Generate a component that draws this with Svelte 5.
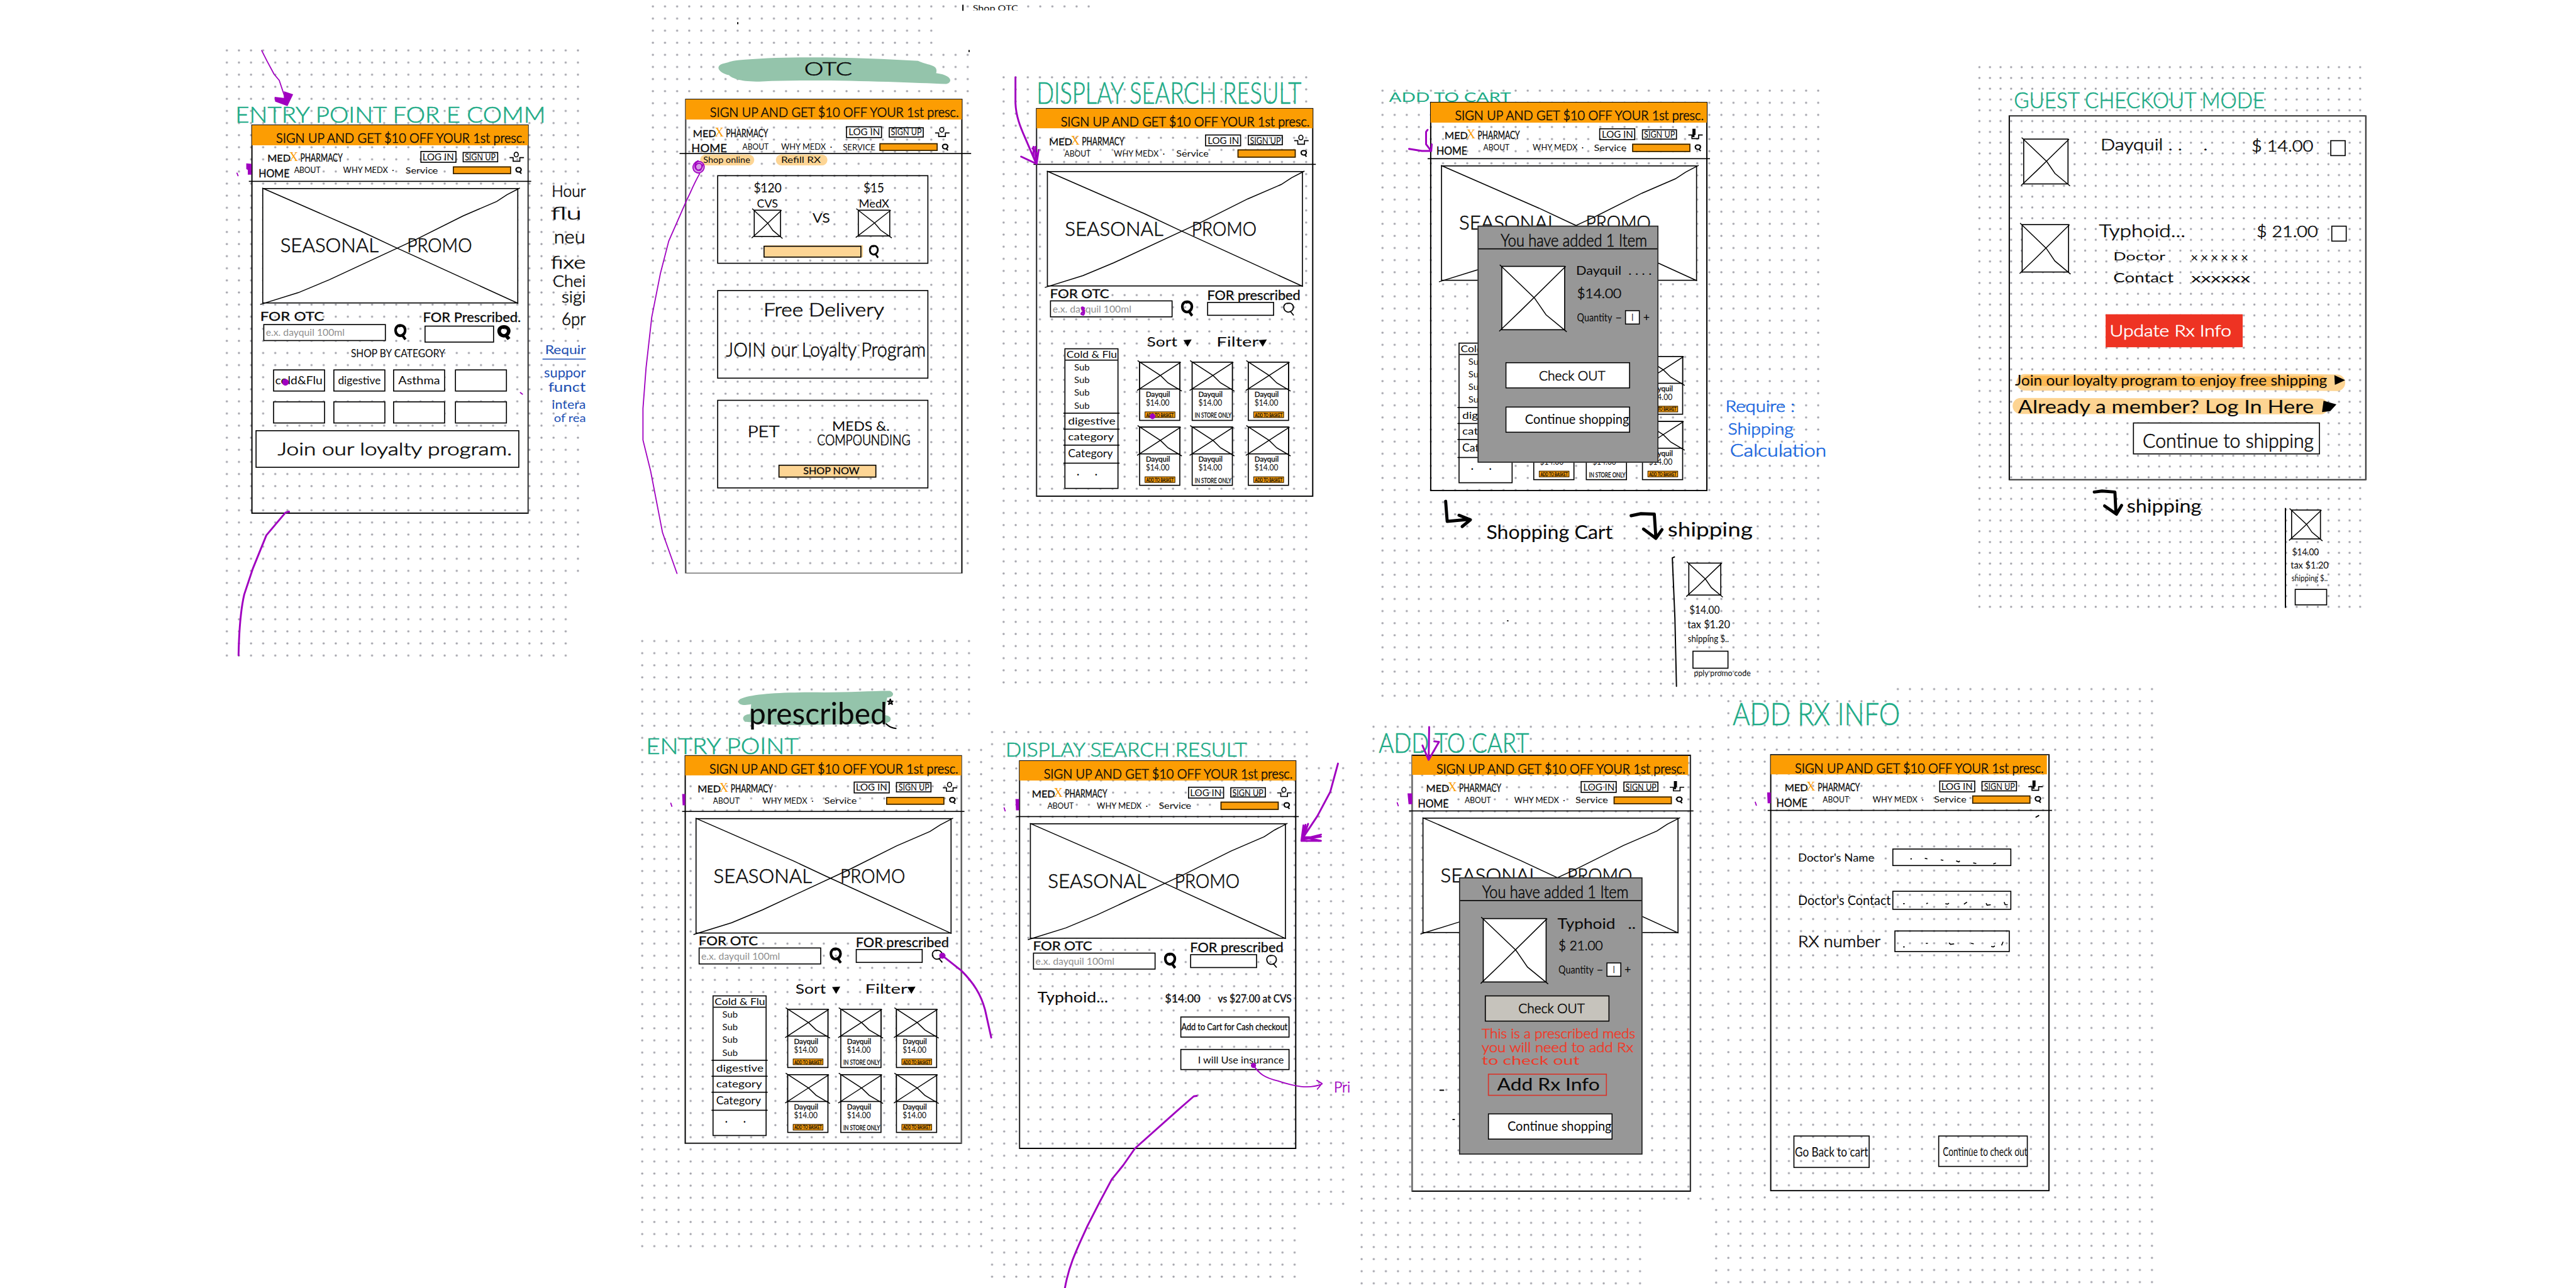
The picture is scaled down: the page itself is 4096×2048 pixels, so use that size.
<script>
  // Dotted paper areas: left, top, columns, rows, pitch x, pitch y
  const P = 23.49;
  const sheets = [
    [440.3, 97.9, 29, 51], [1121.8, 97.9, 1, 44],
    [1267.3, 12.5, 24, 47], [1831.3, 106.5, 3, 43], [1831.3, 12.5, 3, 1], [1995.7, 12.5, 6, 1],
    [1948, 150, 26, 51],
    [2683.5, 176, 37, 51],
    [3842, 130.3, 37, 51, 20.53, 20.95],
    [1246.6, 1244.3, 28, 7], [1246.6, 1408.7, 25, 2], [1246.6, 1455.7, 29, 42],
    [1925.6, 1421, 27, 40], [1925.6, 2360.6, 26, 6], [2560, 1491, 3, 37],
    [2666, 1410.6, 28, 3], [2643, 1481, 29, 37], [2643, 2350, 24, 7],
    [3354.8, 1361, 36, 49], [3683.7, 1337.5, 22, 1], [3331, 2348.6, 1, 7], [3324.5, 1411, 1, 40]
  ].map(([x, y, c, r, px = P, py = P]) => ({ x: x - px / 2, y: y - py / 2, w: c * px, h: r * py, px, py }));

  // Handwritten notes on the canvas: text, left, top, width, cap height, style
  const notes = [
    ['ENTRY POINT FOR E COMM', 457, 207, 602, 31, 'green'],
    ['DISPLAY SEARCH RESULT', 2012, 161, 514, 41, 'green'],
    ['ADD TO CART', 2696, 180, 237, 18, 'green'],
    ['GUEST CHECKOUT MODE', 3909, 179, 487, 31, 'green'],
    ['ENTRY POINT', 1254, 1433, 296, 31, 'green'],
    ['DISPLAY SEARCH RESULT', 1952, 1440, 468, 28, 'green'],
    ['ADD TO CART', 2676, 1423, 292, 38, 'green'],
    ['ADD RX INFO', 3363, 1365, 325, 43, 'green'],
    ['OTC', 1561, 121, 93, 26, 'black'],
    ['prescribed', 1454, 1363, 268, 43, 'bold'],
    ['Hour', 1071, 360, 66, 22, 'black'],
    ['flu', 1069, 401, 60, 25, 'black'],
    ['neu', 1075, 447, 61, 26, 'black'],
    ['fixe', 1069, 497, 68, 24, 'black'],
    ['Chei', 1073, 534, 64, 23, 'black'],
    ['sigi', 1090, 565, 47, 22, 'black'],
    ['6pr', 1090, 607, 47, 24, 'black'],
    ['Requir', 1058, 670, 79, 17, 'navy'],
    ['suppor', 1056, 714, 81, 18, 'navy'],
    ['funct', 1064, 743, 73, 18, 'navy'],
    ['intera', 1071, 777, 66, 17, 'navy'],
    ['of rea', 1075, 803, 62, 16, 'navy'],
    ['Require :', 3349, 777, 135, 23, 'blue'],
    ['Shipping', 3354, 821, 127, 23, 'blue'],
    ['Calculation', 3358, 862, 187, 24, 'blue'],
    ['Shopping Cart', 2885, 1019, 245, 27, 'bold'],
    ['shipping', 3237, 1013, 165, 28, 'bold'],
    ['shipping', 4128, 969, 145, 26, 'bold'],
    ['$14.00', 3279, 1176, 59, 15, 'black'],
    ['tax $1.20', 3275, 1205, 83, 15, 'black'],
    ['shipping $..', 3276, 1232, 80, 14, 'black'],
    ['pply promo code', 3288, 1300, 110, 12, 'black'],
    ['$14.00', 4449, 1064, 52, 14, 'black'],
    ['tax $1.20', 4446, 1090, 74, 13, 'black'],
    ['shipping $..', 4448, 1116, 70, 12, 'black'],
    ['Pri', 2589, 2100, 32, 20, 'violet']
  ];
  const products = [true, false, true, true, false, true];
  const cats = ['Sub', 'Sub', 'Sub', 'Sub'];
  const tiles = [['cold&Flu', 92], ['digestive', 83], ['Asthma', 81], null, null, null, null, null];
</script>

{#snippet ink(s, w, h, c = '')}
  <svg class="ink {c}" class:fine={h > 18} width={w} height={h}>
    <text x="0" y={h} font-size={h * 1.38} textLength={w} lengthAdjust="spacingAndGlyphs">{s}</text>
  </svg>
{/snippet}

{#snippet cross(w, h)}
  <svg class="cross" width={w} height={h} viewBox="0 0 {w} {h}">
    <rect x="1" y="1" width={w - 2} height={h - 2} fill="#fff" />
    <path d="M-3 -2 L{w * 0.52} {h * 0.5} L{w * 0.7} {h * 0.76} L{w + 3} {h + 3} M-4 {h + 2} L{w * 0.3} {h * 0.7} L{w + 1} 1" />
  </svg>
{/snippet}

{#snippet lens(w, h, sw)}
  <svg class="lens" width={w} height={h} viewBox="0 0 24 30" preserveAspectRatio="none">
    <path stroke-width={sw} d="M14 3 C6 1 2 7 3 13 C4 20 11 23 16 20 C22 17 23 9 19 5 C17 3 13 2 9 4 M15 19 L22 28" />
  </svg>
{/snippet}

{#snippet header(kind)}
  <div class="banner">{@render ink('SIGN UP AND GET $10 OFF YOUR 1st presc.', 483, 19)}</div>
  <div class="brand {kind}">
    <div class="logo">
      {@render ink('MED', 45, 14, 'heavy')}{@render ink('X', 18, 18, 'orange')}{@render ink('PHARMACY', 82, 16, 'heavy')}
    </div>
    <div class="pill login">{@render ink('LOG IN', 61, 13)}</div>
    <div class="pill signup">{@render ink('SIGN UP', 60, 13)}</div>
    <svg class="cart" width="28" height="20" viewBox="0 0 28 20">
      <path d="M0 11 H7 V18 H20 V11 H28" />
      {#if kind === 'added'}
        <path class="thick" d="M11 -1 V11 M8 12 H12" />
      {:else}
        <ellipse cx="13" cy="5" rx="4" ry="4.5" />
      {/if}
    </svg>
  </div>
  <div class="nav {kind}">
    {#if kind !== 'results'}<div class="home">{@render ink('HOME', kind === 'otc' ? 69 : 60, 15, 'heavy')}</div>{/if}
    {@render ink('ABOUT', 51, 11)}
    {@render ink('WHY MEDX  ·', 99, 11)}
    {@render ink(kind === 'otc' ? 'SERVICE' : 'Service', 63, 12)}
    <div class="field"></div>
    {@render lens(13, 14, 5)}
  </div>
{/snippet}

{#snippet promo()}
  <div class="promo">
    <svg width="497" height="224" viewBox="0 0 497 224">
      <path d="M0 0 L190 83 L254 113 L497 224 M-4 226 L70 203 L130 178 L300 99 L390 54 L455 26 L475 13 L500 0" />
    </svg>
    {@render ink('SEASONAL', 191, 27)}
    {@render ink('PROMO', 126, 27)}
  </div>
{/snippet}

{#snippet search(thin = true)}
  <div class="search" class:first={!thin}>
    <div class="otc-col">
      {@render ink('FOR OTC', thin ? 115 : 124, 17, 'heavy')}
      <div class="line"><div class="input">{@render ink('e.x. dayquil 100ml', 153, 14, 'grey')}</div>{@render lens(24, 32, 5)}</div>
    </div>
    <div class="rx-col">
      {@render ink(thin ? 'FOR prescribed' : 'FOR Prescribed.', thin ? 181 : 190, 18, 'heavy')}
      <div class="line"><div class="input"></div>{@render lens(24, 28, thin ? 2.2 : 7)}</div>
    </div>
  </div>
{/snippet}

{#snippet catalog(tools = true)}
  <div class="catalog">
    <div class="tools">
      {#if tools}
        {@render ink('Sort', 59, 18)}<svg width="16" height="14"><path class="solid" d="M0 1 L16 0 L8 14Z" /></svg>
        {@render ink('Filter', 82, 18)}<svg width="16" height="14"><path class="solid" d="M0 1 L16 0 L8 14Z" /></svg>
      {/if}
    </div>
    <div class="cols">
      <div class="list">
        <div class="head">{@render ink('Cold & Flu', 98, 13)}</div>
        <div class="subs">{#each cats as c}{@render ink(c, 30, 12)}{/each}</div>
        <div class="cat">{@render ink('digestive', 92, 14)}</div>
        <div class="cat">{@render ink('category', 89, 14)}</div>
        <div class="cat last">{@render ink('Category', 87, 15)}</div>
        <div class="dots">·<span>·</span></div>
      </div>
      <div class="grid">
        {#each products as online}
          <div class="card">
            {@render cross(80, 54)}
            <div class="name">{@render ink('Dayquil', 47, 10, 'heavy')}</div>
            <div class="price">{@render ink('$14.00', 46, 11)}</div>
            {#if online}
              <div class="buy">{@render ink('ADD TO BASKET', 53, 7, 'heavy')}</div>
            {:else}
              <div class="store">{@render ink('IN STORE ONLY', 71, 10, 'heavy')}</div>
            {/if}
          </div>
        {/each}
      </div>
    </div>
  </div>
{/snippet}

{#snippet modal(rx)}
  <div class="modal" class:rx>
    <div class="mtitle">{@render ink('You have added 1 Item', 284, 24)}</div>
    <div class="item">
      {@render cross(124, 125)}
      <div class="info">
        {#if rx}{@render ink('Typhoid   ..', 152, 20, 'medium')}{:else}{@render ink('Dayquil  . . . .', 147, 17)}{/if}
        {@render ink(rx ? '$ 21.00' : '$14.00', 86, 19)}
        <div class="qty">{@render ink('Quantity', 68, 16)}<i>−</i><b>{@render ink('I', 3, 13, 'heavy')}</b><i>+</i></div>
      </div>
    </div>
    <div class="btn out">{@render ink('Check OUT', 129, 19)}</div>
    {#if rx}
      <div class="warn">
        {@render ink('This is a prescribed meds', 298, 19)}
        {@render ink('you will need to add Rx', 294, 19)}
        {@render ink('to check out', 190, 17)}
      </div>
      <div class="btn add">{@render ink('Add Rx Info', 199, 23, 'medium')}</div>
    {/if}
    <div class="btn cont">{@render ink('Continue shopping', 202, 18)}</div>
  </div>
{/snippet}

<div class="viewport">
  <div class="canvas">
    <svg class="layer" width="5000" height="2500">
      <defs>
        {#each sheets as s, i}
          <pattern id="dots{i}" x={s.x} y={s.y} width={s.px} height={s.py} patternUnits="userSpaceOnUse">
            <circle cx={s.px / 2} cy={s.py / 2} r="2.1" fill="#a0a0a8" />
          </pattern>
        {/each}
      </defs>
      {#each sheets as s, i}
        <rect x={s.x} y={s.y} width={s.w} height={s.h} fill="url(#dots{i})" />
      {/each}
      <!-- highlighter strokes -->
      <g class="hl-green">
        <path d="M1402 124 C1412 122 1420 118 1432 117 C1540 107 1680 112 1782 118 C1802 128 1822 124 1817 142 C1850 146 1849 161 1836 163 C1760 160 1600 153 1480 158 C1440 160 1420 152 1415 146 C1398 142 1386 130 1402 124Z" />
        <path d="M1436 1357 C1460 1346 1520 1343 1600 1344 C1650 1344 1690 1341 1727 1341 C1738 1345 1734 1354 1722 1354 L1716 1388 C1734 1389 1732 1402 1718 1404 C1650 1404 1560 1410 1490 1406 C1486 1403 1460 1402 1446 1401 C1438 1394 1444 1386 1456 1386 L1458 1367 C1440 1371 1428 1366 1436 1357Z" />
      </g>
      <g class="hl-orange">
        <path d="M3930 742 C4100 744 4300 738 4536 743" stroke-width="32" />
        <path d="M3934 739 C4100 740 4300 742 4506 740" class="mid" />
        <path d="M3922 788 C4100 790 4300 787 4504 789" stroke-width="31" />
      </g>
    </svg>

    <section class="board b1">
      {@render header('entry')}
      {@render promo()}
      {@render search(false)}
      <div class="shop">{@render ink('SHOP BY CATEGORY', 183, 15)}</div>
      <div class="tiles">
        {#each tiles as t}<div class="tile">{#if t}{@render ink(t[0], t[1], 16)}{/if}</div>{/each}
      </div>
      <div class="loyalty">{@render ink('Join our loyalty program.', 455, 25)}</div>
    </section>

    <section class="board b2">
      {@render header('otc')}
      <div class="subnav">
        <div>{@render ink('Shop online', 91, 12)}</div>
        <div>{@render ink('Refill RX', 77, 12)}</div>
      </div>
      <div class="panel compare">
        <div class="versus">
          <div class="shopcol">{@render ink('$120', 54, 18)}{@render ink('CVS', 41, 15)}{@render cross(53, 53)}</div>
          <div class="vs">{@render ink('VS', 34, 18)}</div>
          <div class="shopcol right">{@render ink('$15', 40, 18)}{@render ink('MedX', 59, 15)}{@render cross(63, 52)}</div>
        </div>
        <div class="find"><div class="hlfield"></div>{@render lens(20, 27, 4)}</div>
      </div>
      <div class="panel deliver">
        {@render ink('Free Delivery', 234, 26)}
        {@render ink('JOIN our Loyalty Program', 388, 28)}
      </div>
      <div class="panel pet">
        <div class="petrow">
          {@render ink('PET', 62, 22)}
          <div class="meds">{@render ink('MEDS &.', 112, 18)}{@render ink('COMPOUNDING', 181, 20)}</div>
        </div>
        <div class="shopnow">{@render ink('SHOP NOW', 109, 14, 'heavy')}</div>
      </div>
    </section>

    <section class="board b3">
      {@render header('results')}
      {@render promo()}
      {@render search()}
      {@render catalog()}
    </section>

    <section class="board b4">
      {@render header('added')}
      {@render promo()}
      <div class="search"></div>
      {@render catalog(false)}
      {@render modal(false)}
    </section>

    <section class="board b5">
      <div class="lineitem">
        {@render cross(88, 89)}
        <div class="desc">{@render ink('Dayquil . .    .', 208, 22)}</div>
        <div class="cost">{@render ink('$ 14.00', 120, 22)}</div>
        <div class="check"></div>
      </div>
      <div class="lineitem second">
        {@render cross(92, 94)}
        <div class="desc">
          {@render ink('Typhoid...', 168, 24)}
          <div class="pair">{@render ink('Doctor', 101, 16)}{@render ink('x x x x x x', 110, 14)}</div>
          <div class="pair p2">{@render ink('Contact', 117, 18)}{@render ink('xxxxxx', 115, 17)}</div>
        </div>
        <div class="cost">{@render ink('$ 21.00', 119, 22)}</div>
        <div class="check"></div>
      </div>
      <div class="update">{@render ink('Update Rx Info', 236, 22)}</div>
      <div class="callout join">
        {@render ink('Join our loyalty program to enjoy free shipping', 606, 21, 'medium')}
        <svg width="21" height="19"><path class="solid" d="M0 0 L21 10 L1 19Z" /></svg>
      </div>
      <div class="callout member">
        {@render ink('Already a member? Log In Here', 574, 26, 'medium')}
        <svg width="28" height="22"><path class="solid" d="M3 0 L28 7 L16 20 L0 22Z" /></svg>
      </div>
      <div class="toship">{@render ink('Continue to shipping', 332, 27)}</div>
    </section>

    <section class="board b6">
      {@render header('results')}
      {@render promo()}
      {@render search()}
      {@render catalog()}
    </section>

    <section class="board b7">
      {@render header('results')}
      {@render promo()}
      {@render search()}
      <div class="result">
        {@render ink('Typhoid...', 137, 20, 'medium')}
        {@render ink('$14.00', 69, 16, 'heavy')}
        {@render ink('vs $27.00 at CVS', 143, 15, 'heavy')}
      </div>
      <div class="actions">
        <div class="btn2">{@render ink('Add to Cart for Cash checkout', 206, 13, 'heavy')}</div>
        <div class="btn2">{@render ink('I will Use insurance', 167, 14)}</div>
      </div>
    </section>

    <section class="board b8 wide">
      {@render header('added')}
      {@render promo()}
      {@render modal(true)}
    </section>

    <section class="board b9 wide">
      {@render header('added')}
      <div class="form">
        <div class="frow">{@render ink("Doctor's Name", 148, 16)}<div class="fin f1"><svg width="226" height="32"><path d="M33 18h3 M61 17l5 1 M92 20l5 1 M122 22l5 2 l2 -2 M155 26l6 1 M194 28l5 -2" /></svg></div></div>
        <div class="frow">{@render ink("Doctor's Contact", 180, 18)}<div class="fin f2"><svg width="226" height="35"><path d="M19 23h3 M64 23l3 -1 M101 23l4 1 l3 -2 M137 24l6 -4 M180 22l2 4 l7 -1 M215 20l2 5 l5 0" /></svg></div></div>
        <div class="frow">{@render ink('RX number', 160, 22)}<div class="fin f3"><svg width="220" height="40"><path d="M15 30h3 M59 23h4 M104 22l3 3 l7 -1 M147 23l5 1 M186 29l4 1 l3 -2 M206 27l3 -7" /></svg></div></div>
      </div>
      <div class="foot">
        <div class="fbtn back">{@render ink('Go Back to cart', 142, 18)}</div>
        <div class="fbtn next">{@render ink('Continue to check out', 164, 17)}</div>
      </div>
    </section>

    {#each notes as [s, x, y, w, h, c]}
      <div class="note" style="left:{x}px;top:{y}px">{@render ink(s, w, h, c)}</div>
    {/each}
    <div class="note clip">{@render ink('Shop OTC', 88, 12)}</div>

    <div class="note thumb1">{@render cross(64, 64)}</div>
    <div class="note thumb2">{@render cross(58, 58)}</div>
    <div class="note code1"></div>
    <div class="note code2"></div>

    <svg class="layer" width="5000" height="2500">
      <g class="pen">
        <path d="M1869 10 V20 M1432 44v2 M1881 98v2" />
        <path d="M1728 1357 l4 10 l-9 -6 h10 l-8 6z" />
        <path d="M1720 1405 q8 8 19 9" />
        <path d="M3250 1081 L3246 1083 L3251 1200 L3254 1332 M4436 987 V1179" />
        <path d="M3952 1586 l5 -3 M2795 2116 h7 M2820 2173h3 M2926 1205h1" />
      </g>
      <g class="marker">
        <path d="M2806 973 L2809 1012 L2852 1008 M2832 1000 L2854 1009 L2838 1022" />
        <path d="M3166 1001 L3185 997 L3211 998 L3214 1043 M3190 1027 L3214 1045 L3226 1028" />
        <path d="M4065 955 L4080 953 L4105 955 L4107 995 M4085 982 L4108 998 L4118 981" />
      </g>
      <g class="purple thin">
        <path d="M508 98 L518 118 L532 144 L542 156 L553 189" />
        <path d="M1358 337 C1345 360 1340 375 1334 386 L1298 468 L1282 530 L1265 616 L1254 714 L1248 793 V854 L1263 915 L1286 1034 L1314 1113" />
        <path d="M2433 2068 C2445 2085 2455 2092 2480 2098 C2510 2108 2540 2115 2566 2104 M2556 2097 L2566 2103 L2557 2114" />
        <path class="blob" d="M1355 312 C1340 318 1343 336 1357 336 C1371 332 1370 313 1355 313 C1343 320 1350 334 1360 330 C1368 318 1355 312 1350 322 C1350 334 1362 332 1364 320" />
        <path d="M460 336 l2 5 M1302 1559 l2 6 M1949 1568 l2 6 M2712 1558 l2 6 M3407 1557 l2 6 M1010 762 l4 3" />
      </g>
      <g class="purple">
        <path d="M561 993 L554 995 L517 1039 L491 1103 L474 1154 C468 1180 464 1220 463 1272" />
        <path d="M1971 150 V200 C1972 225 1980 246 1990 268 L2011 317 M1982 304 L2012 318 L2016 291 M2006 285 V305 M2010 285 V310 M2004 288 L2014 300" />
        <path d="M1828 1854 L1866 1884 C1890 1908 1904 1930 1912 1960 L1924 2014" />
        <path d="M2323 2127 L2317 2128 L2286 2155 L2203 2229 L2180 2262 L2158 2289 L2135 2332 L2111 2379 C2090 2425 2075 2455 2067 2500" />
        <path d="M2597 1482 L2582 1537 L2557 1584 L2531 1623" />
        <path d="M2530 1602 L2526 1632 L2564 1632 L2530 1625 L2564 1624 L2528 1629 L2564 1620 M2534 1601 L2529 1628 L2539 1599" />
        <path d="M2774 1411 L2773 1475 M2761 1447 L2773 1475 L2793 1440 L2784 1439" />
        <path d="M2771 252 L2768 256 V280 L2778 293 M2735 289 L2760 293 L2778 293 L2779 280" />
        <path d="M2104 598 q-6 -4 -3 3 q6 4 2 10 q-6 0 -3 -4 q8 -4 2 -6" />
      </g>
      <g class="fill">
        <path d="M533 188 L551 190 L551 177 L569 183 L558 206 L534 197Z" />
        <path d="M478 317 L488 318 V339 H481 V330 L478 328Z M1324 1541 L1330 1541 V1563 H1325Z M1971 1551 H1978 V1573 H1972Z M2732 1540 H2741 V1561 H2734Z M3430 1538 H3437 V1559 H3431Z" />
        <circle cx="554" cy="742" r="6.5" /><circle cx="2237" cy="808" r="5.5" /><circle cx="1829" cy="1855" r="6" /><circle cx="2433" cy="2068" r="5" />
      </g>
      <path d="M1053 697 H1137" class="rule" />
    </svg>
  </div>
</div>

<style>
  :global(body) { background: #fff; overflow: hidden; }
  .viewport { width: 4096px; height: 2048px; overflow: hidden; }
  .canvas { position: relative; width: 5000px; height: 2500px; transform: scale(0.8192); transform-origin: 0 0; color: #000; font-family: Lato, "Open Sans", sans-serif; }
  .canvas :global(*) { box-sizing: border-box; }
  .layer { position: absolute; left: 0; top: 0; display: block; }
  svg { display: block; overflow: visible; flex: none; }
  .ink { color: #0a0a0a; }
  .ink text { fill: currentColor; stroke: currentColor; stroke-width: 0; font-family: Lato, "Open Sans", sans-serif; white-space: pre; }
  .fine text { font-weight: 300; stroke-width: 0.8px; }
  .medium text, .bold text { font-weight: 400; stroke-width: 0.1px; }
  .heavy text { font-weight: 400; stroke-width: 0.4px; }
  .grey { color: #8f8f8f; }
  .orange { color: #fa9d0a; }
  .orange text { font-family: "Liberation Serif", serif; }
  .green { color: #1dab87; }
  .navy { color: #1c4fb4; }
  .blue { color: #1565e0; }
  .violet { color: #a000c0; }
  .cross path { fill: none; stroke: #000; stroke-width: 1.8; }
  .cross rect { stroke: #000; stroke-width: 2; }
  .lens path { fill: none; stroke: #000; }
  .solid { fill: #000; }

  .board { position: absolute; width: 536px; height: 752.5px; display: flex; flex-direction: column; box-shadow: 0 0 0 1.2px #000, inset 0 0 0 1.2px #000; }
  .wide { width: 540px; height: 846px; }
  .b1 { left: 488.5px; top: 243px; }
  .b2 { left: 1331.3px; top: 193px; height: 920px; clip-path: inset(-2px -30px 0 -30px); }
  .b3 { left: 2012.3px; top: 210.5px; }
  .b4 { left: 2777.3px; top: 199.4px; }
  .b5 { left: 3900px; top: 225.4px; width: 691.5px; height: 705.5px; }
  .b6 { left: 1329.8px; top: 1466.8px; }
  .b7 { left: 1978.7px; top: 1476.5px; }
  .b8 { left: 2741px; top: 1465.8px; }
  .b9 { left: 3436.8px; top: 1464.5px; }

  .banner { width: 536px; height: 38.5px; flex: none; padding: 15px 0 0 47px; background: #fc9d03; }
  .wide .banner { margin-top: 1px; height: 37.5px; }
  .brand { display: grid; grid-template-columns: 297px 82.5px 90.5px auto; align-items: center; height: 46px; padding-left: 30px; flex: none; }
  .brand.results { padding-left: 24px; grid-template-columns: 303px 82.5px 90.5px auto; }
  .brand.added { padding-left: 27px; grid-template-columns: 300px 82.5px 90.5px auto; }
  .brand.otc { padding-left: 14px; height: 50px; }
  .logo { display: flex; align-items: flex-end; gap: 4px; }
  .logo :global(.orange) { margin: 0 0 1px -7px; }
  .pill { display: flex; align-items: center; justify-content: center; border: 2px solid #000; }
  .login { width: 70px; height: 23px; }
  .signup { width: 68.5px; height: 20px; }
  .cart path, .cart ellipse { fill: none; stroke: #000; stroke-width: 2; }
  .cart .thick { stroke-width: 6; }
  .nav { display: grid; align-items: center; height: 26px; margin: -1px -6px 0; padding-bottom: 18px; border-bottom: 2px solid #000; flex: none; grid-template-rows: 8px; }
  .nav.entry { padding-left: 19px; grid-template-columns: 69.7px 95.3px 120.7px 91.8px 121.5px auto; }
  .nav.results { padding-left: 60px; grid-template-columns: 96px 120.6px 119.4px 122px auto; }
  .nav.added { padding-left: 17px; grid-template-columns: 90.5px 96.5px 119px 74px 121px auto; }
  .nav.otc { height: 17px; margin: 0 -18px 0 -12px; padding: 0 0 9px 22.6px; grid-template-columns: 99px 75px 120.4px 71px 121px auto; }
  .home { padding-top: 12px; align-self: center; }
  .otc .home { padding-top: 4px; }
  .field { width: 113px; height: 15.5px; background: #fa9d0a; border: 2px solid #2a1c00; }

  .promo { position: relative; width: 497px; height: 224px; margin: 12px 0 0 20px; flex: none; display: flex; align-items: center; gap: 55px; padding-left: 33px; background: #fff; border: 2px solid #000; }
  .promo > svg:first-child { position: absolute; left: -2px; top: -2px; }
  .promo > svg path { fill: none; stroke: #000; stroke-width: 1.8; }

  .search { display: flex; height: 60px; margin-top: 6px; padding-left: 26px; flex: none; }
  .otc-col { width: 305px; }
  .line { display: flex; align-items: flex-start; margin-top: 4px; gap: 16px; }
  .input { width: 238px; height: 33px; border: 2px solid #000; background: #fff; display: flex; align-items: center; padding-left: 3px; }
  .rx-col .input { width: 130px; height: 27px; }
  .rx-col { padding-top: 2px; }
  .search.first { margin-top: 16px; padding-left: 16px; }
  .first .otc-col { width: 316px; }
  .first .line { margin-top: 7px; padding-left: 6px; }
  .first .rx-col .line { padding-left: 3px; gap: 7px; }
  .first .rx-col .input { width: 135px; height: 33px; }
  .shop { padding: 13px 0 0 192px; flex: none; }
  .tiles { display: grid; grid-template-columns: 117px 116px 120.6px 101px; grid-auto-rows: 43px; row-gap: 19.5px; margin: 24px 0 0 41px; flex: none; }
  .tile { width: 101px; border: 2px solid #000; background: #fff; display: flex; align-items: center; justify-content: center; }
  .loyalty { width: 512px; height: 73px; margin: 12.5px 0 0 7px; padding: 22px 0 0 41px; border: 2px solid #000; background: #fff; flex: none; }

  .subnav { display: flex; gap: 42px; padding: 1px 0 0 28px; height: 41px; }
  .subnav div { width: 105px; height: 21px; border-radius: 11px; background: #fdd594; padding: 4px 0 0 6px; }
  .subnav div + div { width: 100px; padding-left: 10px; }
  .panel { width: 410px; height: 172px; margin-left: 60.6px; border: 2px solid #000; flex: none; }
  .compare { padding: 14px 72px 0 69px; }
  .versus { display: flex; justify-content: space-between; height: 104px; }
  .shopcol { display: flex; flex-direction: column; align-items: center; }
  .shopcol :global(svg:nth-child(2)) { margin: 14px 0 4px; }
  .vs { padding-top: 58px; margin-left: 6px; }
  .find { display: flex; gap: 14px; align-items: center; margin: 15px 0 0 19px; }
  .hlfield { width: 190px; height: 23px; border: 2px solid #000; background: #fdd594; box-shadow: 3px -1px 0 #fdd594; }
  .deliver { margin-top: 51px; padding: 23px 0 0 15.5px; display: flex; flex-direction: column; gap: 50px; }
  .deliver > :global(svg:first-child) { margin-left: 73px; }
  .pet { margin-top: 41px; padding: 40px 0 0 57px; }
  .petrow { display: flex; gap: 73px; height: 49px; }
  .petrow > :global(svg) { margin-top: 8px; }
  .meds { display: flex; flex-direction: column; gap: 8px; }
  .meds > :global(svg:first-child) { margin-left: 29px; }
  .shopnow { width: 190px; height: 25px; margin: 35px 0 0 60px; border: 2px solid #000; background: #fdd594; display: flex; align-items: center; justify-content: center; padding-left: 16px; }

  .catalog { display: flex; flex-direction: column; flex: none; }
  .tools { display: flex; align-items: center; height: 18px; margin-top: 33px; padding-left: 214px; }
  .tools > :global(svg:nth-child(2)) { margin: 3px 48px 0 12px; }
  .tools > :global(svg:nth-child(4)) { margin-top: 3px; }
  .cols { display: flex; gap: 40px; margin: 3px 0 0 53.5px; }
  .list { width: 105px; height: 273px; border: 2px solid #000; background: #fff; }
  .head { height: 22px; padding: 4px 0 0 2px; border-bottom: 2px solid #000; }
  .subs { height: 101px; padding: 7px 0 0 17px; display: flex; flex-direction: column; gap: 12.5px; }
  .cat { height: 31px; margin: 0 -4px; padding: 7px 0 0 9px; border-top: 2px solid #000; }
  .cat.last { height: 37px; border-bottom: 2px solid #000; }
  .dots { padding: 8px 0 0 22px; font-size: 20px; line-height: 24px; }
  .dots span { padding-left: 30px; }
  .grid { display: grid; grid-template-columns: 102.6px 108.4px 80px; grid-auto-rows: 114.5px; row-gap: 11.8px; margin-top: 26px; }
  .card { width: 80px; background: #fff; border: 2px solid #000; display: flex; flex-direction: column; }
  .card > :global(.cross) { margin: -2px 0 0 -2px; }
  .name { padding: 4px 0 6px 11px; }
  .price { padding-left: 11px; }
  .buy { width: 59px; height: 12px; margin: 12px 0 0 9px; background: #fa9d0a; border: 1.5px solid #000; display: flex; align-items: center; justify-content: center; }
  .store { padding: 14px 0 0 4px; }

  .modal { position: absolute; left: 91px; top: 238.5px; width: 351px; height: 460.5px; background: #979797; border: 2px solid #222; display: flex; flex-direction: column; }
  .modal.rx { width: 355.5px; height: 538px; top: 237.5px; }
  .mtitle { height: 44px; padding: 14px 0 0 43px; border-bottom: 2px solid #000; flex: none; }
  .item { display: flex; gap: 21px; margin: 32.5px 0 0 44px; height: 125px; flex: none; }
  .info { display: flex; flex-direction: column; padding-top: 1px; }
  .info > :global(svg:nth-child(2)) { margin: 26px 0 23px 2px; }
  .rx .info > :global(svg:nth-child(2)) { margin-top: 23px; }
  .qty { display: flex; align-items: center; gap: 6px; padding-left: 2px; height: 28px; }
  .qty i { font-style: normal; font-size: 22px; line-height: 24px; width: 13px; text-align: center; }
  .qty b { width: 29px; height: 28px; background: #fff; border: 2px solid #000; display: flex; align-items: center; justify-content: center; }
  .btn { width: 242px; height: 51px; border: 2px solid #000; background: #fff; flex: none; display: flex; align-items: center; }
  .out { margin: 62px 0 0 52px; padding-left: 63px; }
  .cont { margin: 34.5px 0 0 52px; padding-left: 36px; }
  .rx .out { margin: 25px 0 0 48px; background: #c6c3bc; }
  .rx .cont { margin: 34px 0 0 54px; }
  .warn { display: flex; flex-direction: column; gap: 8px; margin: 13px 0 0 42px; flex: none; }
  .warn :global(.ink) { color: #ee3a2a; }
  .add { width: 231px; height: 43px; margin: 17px 0 0 54px; padding-left: 16px; border-color: #d8352c; background: none; }

  .lineitem { display: flex; height: 166px; padding: 44px 0 0 26.6px; flex: none; }
  .lineitem.second { height: 219px; padding-left: 23.6px; }
  .desc { width: 293px; margin-left: 62px; padding-top: 1px; }
  .second .desc { margin-left: 58px; width: 306px; }
  .cost { width: 153px; padding-top: 3px; }
  .second .cost { width: 145px; }
  .check { width: 30.5px; height: 31px; margin-top: 3px; border: 2px solid #000; background: #fff; }
  .pair { display: flex; align-items: flex-end; gap: 50px; margin: 29px 0 0 28px; }
  .pair.p2 { margin-top: 25px; gap: 34px; }
  .update { width: 266px; height: 64px; margin-left: 187px; padding: 21px 0 0 8px; background: #ee3323; flex: none; }
  .update :global(.ink) { color: #fff; }
  .callout { display: flex; align-items: center; gap: 14px; margin: 53px 0 0 11px; height: 21px; flex: none; }
  .member { margin: 28px 0 0 17px; height: 26px; gap: 16px; }
  .toship { width: 363px; height: 62px; margin: 18px 0 0 239.5px; padding: 20px 0 0 17px; border: 2px solid #000; background: #fff; flex: none; }

  .result { display: grid; grid-template-columns: 247px 103px 143px; align-items: end; padding-left: 35px; height: 58px; flex: none; }
  .actions { display: flex; flex-direction: column; gap: 22px; margin: 27px 0 0 312px; }
  .btn2 { width: 212px; height: 41px; border: 2px solid #000; background: #fff; display: flex; align-items: center; justify-content: flex-end; padding-right: 2px; }
  .btn2 + .btn2 { padding-right: 9px; }

  .form { padding: 73px 0 0 53.5px; display: flex; flex-direction: column; height: 630px; }
  .frow { display: grid; grid-template-columns: 183px 231px; align-items: center; height: 34px; }
  .fin { width: 231px; height: 34px; border: 2px solid #000; }
  .fin path { fill: none; stroke: #000; stroke-width: 2; }
  .frow:nth-child(2) { margin-top: 48px; }
  .frow:nth-child(3) { margin-top: 43px; }
  .f1 { background: #fff; }
  .f2 { height: 37px; }
  .f3 { width: 224px; height: 42px; margin-left: 4px; }
  .foot { display: flex; justify-content: space-between; padding: 0 40.5px 0 43.8px; }
  .fbtn { width: 148.5px; height: 63px; border: 2px solid #000; padding: 21px 0 0 1px; }
  .next { width: 174.5px; height: 61px; padding-left: 7px; }

  .note { position: absolute; }
  .clip { left: 1888px; top: 10px; height: 10px; overflow: hidden; }
  .thumb1 { left: 3277px; top: 1092px; }
  .thumb2 { left: 4447px; top: 988.5px; }
  .code1 { left: 3285px; top: 1263px; width: 70px; height: 34.5px; border: 2px solid #000; background: #fff; }
  .code2 { left: 4454px; top: 1143px; width: 62.5px; height: 32px; border: 2px solid #000; background: #fff; }

  .hl-green path { fill: #94c4ab; }
  .hl-orange path { fill: none; stroke: #fdd492; stroke-linecap: round; }
  .hl-orange .mid { stroke: #fcb954; stroke-width: 20; }
  .pen path { fill: none; stroke: #000; stroke-width: 2.4; stroke-linecap: round; stroke-linejoin: round; }
  .marker path { fill: none; stroke: #000; stroke-width: 6; stroke-linecap: round; stroke-linejoin: round; }
  .purple path { fill: none; stroke: #a000c0; stroke-width: 3.6; stroke-linecap: round; stroke-linejoin: round; }
  .purple.thin path { stroke-width: 2.2; }
  .purple.thin .blob { fill: #d79be6; }
  .fill { fill: #a000c0; }
  .rule { stroke: #1c4fb4; stroke-width: 1.6; }
</style>
